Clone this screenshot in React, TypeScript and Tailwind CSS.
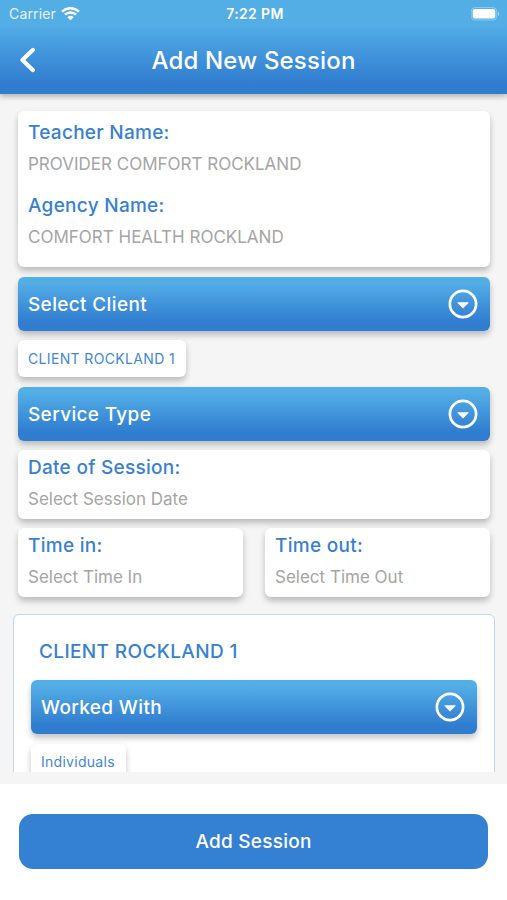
import type { ReactNode } from "react";

// Circle with a small caret, used at the end of every dropdown
const CaretCircle = () => (
  <svg className="h-[30px] w-[30px] text-white" viewBox="0 0 30 30" fill="none">
    <circle cx="15" cy="15" r="13.1" stroke="currentColor" strokeWidth="2.7" />
    <path d="M9.8 13.3h10.4q.7.1.2.7L15.5 19q-.5.4-1 0L9.6 14q-.5-.6.2-.7Z" fill="currentColor" />
  </svg>
);

const WifiIcon = () => (
  <svg className="h-[14px] w-[19px] text-white" viewBox="0 0 19 14" fill="none" stroke="currentColor">
    <path d="M1.1 4.6a12 12 0 0 1 16.8 0" strokeWidth="2.5" />
    <path d="M4 7.7a7.9 7.9 0 0 1 11 0" strokeWidth="2.4" />
    <path d="M9.5 13.3 6.4 10.2a4.5 4.5 0 0 1 6.2 0Z" fill="currentColor" stroke="none" />
  </svg>
);

const BatteryIcon = () => (
  <svg className="h-[14px] w-[30px]" viewBox="0 0 30 14" fill="none">
    <rect x="0.2" y="0.6" width="25.6" height="12.4" rx="3.8" stroke="#fff" strokeOpacity="0.35" />
    <rect x="1.7" y="2.1" width="22.6" height="9.4" rx="2.2" fill="#fff" />
    <path d="M27 4.8c1.7.6 1.7 3.6 0 4.2Z" fill="#fff" fillOpacity="0.45" />
  </svg>
);

const Dropdown = ({ label }: { label: string }) => (
  <button className="flex h-[54px] w-full shrink-0 items-center justify-between rounded-[6px] bg-linear-to-b from-[#54aee6] from-10% to-[#307ccf] to-85% pr-3 pl-2.5 shadow-[0_4px_6px_rgba(0,0,0,0.24)]">
    <span className="pt-0.5 text-[19px] leading-6 font-medium tracking-[0.35px] text-white">{label}</span>
    <CaretCircle />
  </button>
);

const Field = ({ label, value }: { label: string; value: string }) => (
  <div>
    <p className="text-[19px] leading-6 font-medium tracking-[0.28px] text-[#3781cf]">{label}</p>
    <p className="mt-[7px] text-[17px] leading-6 text-[#a5a5a5]">{value}</p>
  </div>
);

const Card = ({ className, children }: { className: string; children: ReactNode }) => (
  <div className={`rounded-[6px] bg-white px-2.5 shadow-[0_4px_6px_rgba(0,0,0,0.24)] ${className}`}>
    {children}
  </div>
);

export default function App() {
  return (
    <div className="flex h-[900px] w-[507px] flex-col overflow-hidden bg-white font-['Inter',sans-serif] whitespace-nowrap">
      {/* Header */}
      <header className="relative z-10 h-[94px] shrink-0 bg-linear-to-b from-[#54aee6] from-25% to-[#307ccf] to-90% shadow-[0_3px_5px_rgba(0,0,0,0.25)]">
        <div className="grid h-[27px] grid-cols-3 items-center pr-[6px] pl-[9px] text-[14px] text-white">
          <div className="flex items-center gap-[5px]">
            <span className="tracking-[0.15px] text-white/85">Carrier</span>
            <WifiIcon />
          </div>
          <span className="text-center text-[14px] font-semibold tracking-[0.35px]">7:22 PM</span>
          <div className="flex justify-end">
            <BatteryIcon />
          </div>
        </div>
        <div className="grid h-[66px] grid-cols-[60px_1fr_60px] items-center">
          <svg className="ml-[19px] h-[26px] w-[18px] text-white" viewBox="0 0 18 26" fill="none">
            <path d="M14 2.8 3.4 13 14 23.2" stroke="currentColor" strokeWidth="4" strokeLinecap="round" strokeLinejoin="round" />
          </svg>
          <h1 className="pt-px text-center text-[24px] font-medium tracking-[0.18px] text-white">Add New Session</h1>
        </div>
      </header>

      {/* Form */}
      <main className="h-[690px] shrink-0 bg-[#f5f5f5] pb-3">
        <div className="flex h-full flex-col overflow-hidden pt-[17px] pr-[17px] pl-[18px]">
          <Card className="h-[156px] shrink-0 space-y-[18px] pt-[10px]">
            <Field label="Teacher Name:" value="PROVIDER COMFORT ROCKLAND" />
            <Field label="Agency Name:" value="COMFORT HEALTH ROCKLAND" />
          </Card>
          <div className="mt-2.5">
            <Dropdown label="Select Client" />
          </div>
          <Card className="mt-[9px] flex h-[37px] w-[168px] shrink-0 items-center">
            <span className="text-[14px] tracking-[0.35px] text-[#3f88d5]">CLIENT ROCKLAND 1</span>
          </Card>
          <div className="mt-2.5">
            <Dropdown label="Service Type" />
          </div>
          <Card className="mt-[9px] h-[69px] shrink-0 pt-[6px]">
            <Field label="Date of Session:" value="Select Session Date" />
          </Card>
          <div className="mt-[9px] grid shrink-0 grid-cols-2 gap-[22px]">
            <Card className="h-[69px] pt-[6px]">
              <Field label="Time in:" value="Select Time In" />
            </Card>
            <Card className="h-[69px] pt-[6px]">
              <Field label="Time out:" value="Select Time Out" />
            </Card>
          </div>

          {/* Client block */}
          <section className="-mx-[5px] mt-[17px] h-[300px] shrink-0 rounded-[6px] border border-[#bcd8ee] bg-white px-[17px] pt-[25px]">
            <h2 className="pl-2 text-[19px] leading-6 font-medium tracking-[0.38px] text-[#3781cf]">CLIENT ROCKLAND 1</h2>
            <div className="mt-[16px]">
              <Dropdown label="Worked With" />
            </div>
            <Card className="mt-2.5 flex h-[35px] w-[95px] items-center">
              <span className="text-[14px] tracking-[0.28px] text-[#3f88d5]">Individuals</span>
            </Card>
          </section>
        </div>
      </main>

      {/* Footer */}
      <footer className="px-[19px] pt-[30px]">
        <button className="h-[55px] w-full rounded-[14px] bg-[#3481d3] pt-[2px] text-[19px] font-medium tracking-[0.25px] text-white">
          Add Session
        </button>
      </footer>
    </div>
  );
}
